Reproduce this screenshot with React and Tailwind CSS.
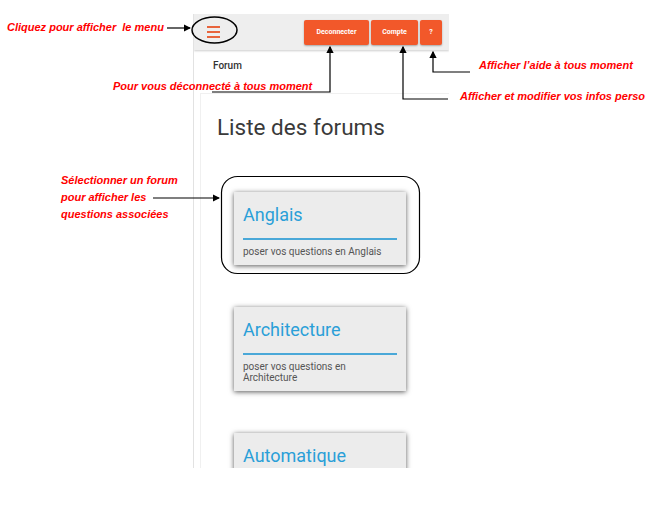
import React from "react";

const forums = [
  { name: "Anglais", desc: "poser vos questions en Anglais" },
  { name: "Architecture", desc: "poser vos questions en Architecture" },
  { name: "Automatique", desc: "poser vos questions en Automatique" },
];

const ForumCard = ({ name, desc }) => (
  <div className="w-[172px] bg-[#ececec] shadow-[0_1px_5px_rgba(0,0,0,0.65)] px-[9px] pt-[12px] pb-[8px]">
    <h3 className="text-[18px] leading-[22px] text-[#2a9fd8]">{name}</h3>
    <div className="h-[2px] bg-[#4aa8d8] mt-[12px] mb-[6px]" />
    <p className="text-[10px] leading-[11px] text-[#555]">{desc}</p>
  </div>
);

const Note = ({ className, children }) => (
  <p className={`absolute text-[#ff0000] font-bold italic text-[11px] leading-[17px] whitespace-nowrap ${className}`}>
    {children}
  </p>
);

const App = () => {
  return (
    <div className="relative w-[654px] h-[507px] bg-white overflow-hidden font-['Liberation_Sans',sans-serif]">
      {/* capture d'ecran mobile */}
      <div className="absolute left-[193px] top-[14px] w-[256px] h-[454px] overflow-hidden border-l border-[#e2e2e2] bg-white font-['Roboto',sans-serif]">
        <div className="h-[36px] bg-[#eeeeee] shadow-[0_1px_2px_rgba(0,0,0,0.2)] flex items-center justify-between pl-[13px] pr-[7px]">
          <div className="flex flex-col gap-[3px]">
            <span className="block w-[13px] h-[2px] bg-[#e8643c]" />
            <span className="block w-[13px] h-[2px] bg-[#e8643c]" />
            <span className="block w-[13px] h-[2px] bg-[#e8643c]" />
          </div>
          <div className="flex gap-[2px]">
            <button className="h-[25px] w-[65px] rounded-[2px] bg-[#f2582a] text-white text-[7px] font-bold shadow-[0_1px_2px_rgba(0,0,0,0.3)]">Deconnecter</button>
            <button className="h-[25px] w-[47px] rounded-[2px] bg-[#f2582a] text-white text-[7px] font-bold shadow-[0_1px_2px_rgba(0,0,0,0.3)]">Compte</button>
            <button className="h-[25px] w-[22px] rounded-[2px] bg-[#f2582a] text-white text-[7px] font-bold shadow-[0_1px_2px_rgba(0,0,0,0.3)]">?</button>
          </div>
        </div>
        <div className="h-[43px] pl-[19px] pt-[8px] text-[10px] font-medium text-[#333]">Forum</div>
        <div className="ml-[6px] border-l border-t border-[#f0f0f0] h-[400px] pl-[16px] pt-[20px]">
          <h1 className="text-[22.5px] leading-[26px] text-[#3a3a3a] font-normal">Liste des forums</h1>
          <div className="flex flex-col gap-[42px] pl-[17px] pt-[52px]">
            {forums.map((f) => (
              <ForumCard key={f.name} name={f.name} desc={f.desc} />
            ))}
          </div>
        </div>
      </div>

      {/* annotations */}
      <svg className="absolute inset-0" width="654" height="507" viewBox="0 0 654 507" fill="none">
        <defs>
          <marker id="ah" markerWidth="6" markerHeight="6" refX="5" refY="3" orient="auto">
            <path d="M0,0 L6,3 L0,6 z" fill="#000" />
          </marker>
        </defs>
        <ellipse cx="214.5" cy="30" rx="22.5" ry="13" stroke="#000" strokeWidth="1.5" />
        <line x1="167" y1="28" x2="190" y2="28" stroke="#000" strokeWidth="1.2" markerEnd="url(#ah)" />
        <polyline points="212,92 330,92 330,47" stroke="#000" strokeWidth="1.2" markerEnd="url(#ah)" />
        <polyline points="448,99 403,99 403,47" stroke="#000" strokeWidth="1.2" markerEnd="url(#ah)" />
        <polyline points="470,72 433,72 433,52" stroke="#000" strokeWidth="1.2" markerEnd="url(#ah)" />
        <rect x="221.5" y="176.5" width="198" height="97" rx="16" stroke="#000" strokeWidth="1.2" />
        <line x1="153" y1="198" x2="219" y2="198" stroke="#000" strokeWidth="1.2" markerEnd="url(#ah)" />
      </svg>

      <Note className="left-[7px] top-[19px]">Cliquez pour afficher&nbsp; le menu</Note>
      <Note className="left-[113px] top-[78px]">Pour vous déconnecté à tous moment</Note>
      <Note className="left-[479px] top-[57px]">Afficher l’aide à tous moment</Note>
      <Note className="left-[460px] top-[88px]">Afficher et modifier vos infos perso</Note>
      <Note className="left-[61px] top-[172px]">
        Sélectionner un forum<br />pour afficher les<br />questions associées
      </Note>
    </div>
  );
};

export default App;
